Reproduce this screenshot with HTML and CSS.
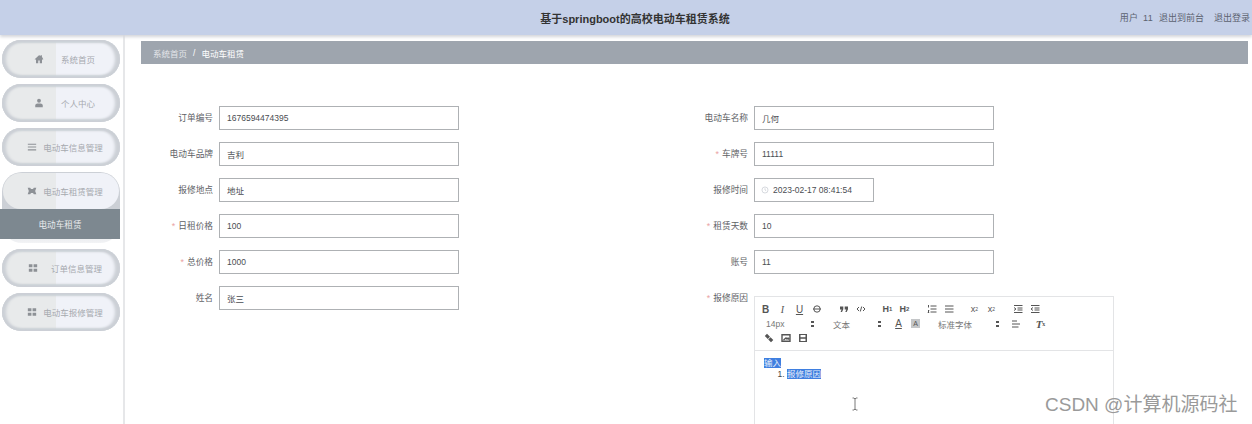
FILE: index.html
```html
<!DOCTYPE html>
<html lang="zh-CN">
<head>
  <meta charset="UTF-8">
  <meta name="viewport" content="width=device-width, initial-scale=1">
  <title>基于springboot的高校电动车租赁系统</title>
  <link rel="stylesheet" href="styles.css">
</head>
<body>
  <header class="top-bar">
    <div class="top-title">基于springboot的高校电动车租赁系统</div>
    <div class="top-links">
      <span class="top-user">用户 11</span>
      <a href="#">退出到前台</a>
      <a class="top-logout" href="#">退出登录</a>
    </div>
  </header>

  <div class="layout">
    <aside class="sidebar">
      <a class="nav-pill nav-wide" href="#">
        <svg class="nav-icon" viewBox="0 0 12 12"><path d="M6 1.500 .8 6.300l.7.7.9-.8V11h2.700V7.800h1.800V11h2.700V6.200l.9.8.7-.7L9.500 3.300V1.600H8.300v.6L6 1.500z"/></svg>
        <span>系统首页</span>
      </a>
      <a class="nav-pill nav-wide" href="#">
        <svg class="nav-icon" viewBox="0 0 12 12"><circle cx="6" cy="3.300" r="2.300"/><path d="M1.500 11V9c0-1.600 1.300-2.500 2.800-2.500h3.400c1.500 0 2.800.9 2.800 2.500v2z"/></svg>
        <span>个人中心</span>
      </a>
      <a class="nav-pill" href="#">
        <svg class="nav-icon" viewBox="0 0 12 12"><path d="M1 2h10v1.300H1zM1 5.400h10v1.300H1zM1 8.800h10v1.300H1z"/></svg>
        <span>电动车信息管理</span>
      </a>
      <div class="nav-group">
        <a class="nav-pill nav-open" href="#">
          <svg class="nav-icon" viewBox="0 0 12 12"><path d="M.8 2h3l1 1.500h2.400l1-1.500h3L9.800 6l1.400 4h-3l-1-1.500H4.800l-1 1.500h-3l1.400-4z"/></svg>
          <span>电动车租赁管理</span>
        </a>
        <a class="nav-sub" href="#">电动车租赁</a>
      </div>
      <a class="nav-pill nav-mid" href="#">
        <svg class="nav-icon" viewBox="0 0 12 12"><path d="M1 1.500h4.300v3.700H1zM6.700 1.500H11v3.700H6.700zM1 6.800h4.300v3.700H1zM6.700 6.800H11v3.700H6.700z"/></svg>
        <span>订单信息管理</span>
      </a>
      <a class="nav-pill" href="#">
        <svg class="nav-icon" viewBox="0 0 12 12"><path d="M1 1.500h4.300v3.700H1zM6.700 1.500H11v3.700H6.700zM1 6.800h4.300v3.700H1zM6.700 6.800H11v3.700H6.700z"/></svg>
        <span>电动车报修管理</span>
      </a>
    </aside>

    <main class="content">
      <div class="crumbs">
        <span class="crumb-home">系统首页</span>
        <span class="crumb-sep">/</span>
        <span class="crumb-now">电动车租赁</span>
      </div>

      <form class="rent-form">
        <div class="field">
          <label>订单编号</label>
          <input class="text-input" value="1676594474395" readonly>
        </div>
        <div class="field">
          <label>电动车名称</label>
          <input class="text-input" value="几何" readonly>
        </div>
        <div class="field">
          <label>电动车品牌</label>
          <input class="text-input" value="吉利" readonly>
        </div>
        <div class="field">
          <label><em>*</em>车牌号</label>
          <input class="text-input" value="11111" readonly>
        </div>
        <div class="field">
          <label>报修地点</label>
          <input class="text-input" value="地址" readonly>
        </div>
        <div class="field">
          <label>报修时间</label>
          <div class="date-input">
            <svg viewBox="0 0 10 10"><circle cx="5" cy="5" r="3.800"/><path d="M5 2.800V5l1.500 1"/></svg>
            <span>2023-02-17 08:41:54</span>
          </div>
        </div>
        <div class="field">
          <label><em>*</em>日租价格</label>
          <input class="text-input" value="100" readonly>
        </div>
        <div class="field">
          <label><em>*</em>租赁天数</label>
          <input class="text-input" value="10" readonly>
        </div>
        <div class="field">
          <label><em>*</em>总价格</label>
          <input class="text-input" value="1000" readonly>
        </div>
        <div class="field">
          <label>账号</label>
          <input class="text-input" value="11" readonly>
        </div>
        <div class="field">
          <label>姓名</label>
          <input class="text-input" value="张三" readonly>
        </div>
        <div class="field">
          <label><em>*</em>报修原因</label>
          <div class="editor">
            <div class="toolbar">
              <div class="tool-row">
                <span class="tool-group">
                  <b class="tool">B</b>
                  <i class="tool tool-serif">I</i>
                  <u class="tool">U</u>
                  <span class="tool"><svg viewBox="0 0 10 10"><circle cx="5" cy="5" r="3.200"/><path d="M1 5h8"/></svg></span>
                </span>
                <span class="tool-group">
                  <span class="tool"><svg class="solid" viewBox="0 0 10 10"><path d="M1 2.500h3.300v2.800L3 8H1.600l1-2.500H1zM5.700 2.500H9v2.800L7.700 8H6.300l1-2.500H5.700z"/></svg></span>
                  <span class="tool"><svg viewBox="0 0 10 10"><path d="M3 3 1 5l2 2M7 3l2 2-2 2M5.700 2.500 4.300 7.500"/></svg></span>
                </span>
                <span class="tool-group">
                  <b class="tool tool-head">H<small>1</small></b>
                  <b class="tool tool-head">H<small>2</small></b>
                </span>
                <span class="tool-group tool-group-tight">
                  <span class="tool"><svg viewBox="0 0 10 10"><path d="M3.500 2H9.500M3.500 5H9.500M3.500 8H9.500M1.500 1v2.500M1 6.500h1L1 8.500h1.200"/></svg></span>
                  <span class="tool"><svg viewBox="0 0 10 10"><path d="M1 2h8.500M1 5h8.500M1 8h8.500"/></svg></span>
                </span>
                <span class="tool-group tool-group-tight">
                  <span class="tool tool-script">x<sub>2</sub></span>
                  <span class="tool tool-script">x<sup>2</sup></span>
                </span>
                <span class="tool-group">
                  <span class="tool"><svg viewBox="0 0 10 10"><path d="M1 1.500h8.500M4.500 4h5M4.500 6h5M1 8.500h8.500M1 3.500 3 5 1 6.500"/></svg></span>
                  <span class="tool"><svg viewBox="0 0 10 10"><path d="M1 1.500h8.500M4.500 4h5M4.500 6h5M1 8.500h8.500M3 3.500 1 5l2 1.500"/></svg></span>
                </span>
              </div>
              <div class="tool-row">
                <span class="picker picker-size">14px</span>
                <span class="picker picker-type">文本</span>
                <span class="tool tool-color">A</span>
                <span class="tool tool-bg"><span>A</span></span>
                <span class="picker picker-font">标准字体</span>
                <span class="tool tool-align"><svg viewBox="0 0 10 10"><path d="M1 2h5M1 5h8M1 8h6.500"/></svg></span>
                <span class="tool tool-clean"><i>T</i><small>x</small></span>
              </div>
              <div class="tool-row tool-row-media">
                <span class="tool"><svg class="solid" viewBox="0 0 10 10"><path d="M.8 3 3 .8l3 3L3.800 6zM4.200 6.500l2.300-2.300 2.800 2.800-2.300 2.300z"/></svg></span>
                <span class="tool"><svg class="thick" viewBox="0 0 10 10"><path d="M1 1.700h8v6.600H1zM2.500 7 5 5l1 1 1-1 1 1.500"/></svg></span>
                <span class="tool"><svg class="solid" viewBox="0 0 10 10"><path d="M1 1h8v8H1zM2.500 2v2.300h5V2zM2.500 5.700V8h5V5.700z"/></svg></span>
              </div>
            </div>
            <div class="editor-body">
              <p><span class="picked">输入</span></p>
              <ol><li><span class="picked">报修原因</span></li></ol>
            </div>
          </div>
        </div>
      </form>
    </main>
  </div>

  <svg class="text-cursor" viewBox="0 0 8 14"><path d="M1.500 1H3l1 1 1-1h1.500M4 2v10M1.500 13H3l1-1 1 1h1.500"/></svg>
  <div class="watermark">CSDN @计算机源码社</div>
</body>
</html>
```

FILE: styles.css
```css
html, body {
  height: 100%;
}

body {
  margin: 0;
  position: relative;
  overflow: hidden;
  background-color: #ffffff;
  color: #555;
  font-family: "Liberation Sans", "Noto Sans CJK SC", sans-serif;
  font-size: 8.7px;
}

a {
  color: inherit;
  text-decoration: none;
}

/* top bar */
.top-bar {
  height: 35px;
  display: flex;
  align-items: center;
  position: relative;
  background-color: #c5d0e8;
  box-shadow: 0 2px 3px #d4d6da;
}

.top-title {
  position: absolute;
  left: 0;
  width: 1270px;
  text-align: center;
  font-size: 11px;
  font-weight: bold;
  color: #333;
}

.top-links {
  margin-left: auto;
  margin-right: 2px;
  display: flex;
  gap: 6px;
  color: #5c6270;
  font-size: 9px;
}

.top-user {
  word-spacing: 2px;
  letter-spacing: .3px;
}

.top-logout {
  margin-left: 4px;
}

/* sidebar */
.layout {
  display: flex;
  height: 389px;
}

.sidebar {
  width: 118px;
  flex-shrink: 0;
  padding: 5px 3px 0 2px;
  display: flex;
  flex-direction: column;
  gap: 6px;
  border-right: 2px solid #e6e7e9;
  color: #a6a9af;
  font-size: 8.5px;
}

.nav-pill {
  height: 38px;
  box-sizing: border-box;
  padding-left: 8px;
  border-radius: 19px;
  display: flex;
  align-items: center;
  justify-content: center;
  gap: 6px;
  background: linear-gradient(90deg, #e8eaeb 46%, #f0f2f8 46%);
  box-shadow: inset 4px 0 3px #ccd0d6, inset -5px 0 3px #ccd0d6, inset 0 3px 2px #ccd0d6, inset 0 -3px 2px #ccd0d6;
}

.nav-wide {
  gap: 17px;
  padding-left: 7px;
}

.nav-mid {
  gap: 13px;
}

.nav-icon {
  width: 10px;
  height: 10px;
  flex-shrink: 0;
  fill: #8d9196;
}

.nav-group {
  height: 71px;
  border-radius: 20px;
  background: linear-gradient(#ccd0d6 60%, #f2f3f5);
}

.nav-open {
  height: 36px;
  margin: 1px 1px 0;
  box-shadow: none;
}

.nav-sub {
  height: 30px;
  margin-left: -2px;
  display: flex;
  align-items: center;
  justify-content: center;
  background-color: #7d8890;
  color: #e8eaec;
  font-size: 8.6px;
}

/* main area */
.content {
  flex: 1;
  min-width: 0;
  padding: 6px 4px 0 16px;
}

.crumbs {
  height: 23px;
  display: flex;
  align-items: center;
  gap: 6px;
  padding-left: 12px;
  background-color: #9ea5ae;
  color: #e4e6ea;
  font-size: 8.5px;
}

.crumb-sep,
.crumb-now {
  color: #ffffff;
}

.rent-form {
  margin-top: 42px;
  display: grid;
  grid-template-columns: 535px 1fr;
  row-gap: 12px;
}

.field {
  display: flex;
  align-items: flex-start;
}

.field label {
  width: 72px;
  margin-right: 6px;
  flex-shrink: 0;
  text-align: right;
  line-height: 24px;
  color: #606266;
}

.field label em {
  font-style: normal;
  color: #eaa3a3;
  margin-right: 3px;
}

.text-input {
  width: 240px;
  height: 24px;
  box-sizing: border-box;
  padding: 0 7px;
  border: 1px solid #aeb1b4;
  outline: none;
  font-family: inherit;
  font-size: 8.5px;
  color: #4a4d52;
}

.date-input {
  width: 120px;
  height: 24px;
  box-sizing: border-box;
  padding-left: 6px;
  border: 1px solid #aeb1b4;
  display: flex;
  align-items: center;
  gap: 4px;
  font-size: 8.5px;
  color: #4a4d52;
}

.date-input svg {
  width: 8px;
  height: 8px;
  fill: none;
  stroke: #c0c4cc;
  stroke-width: .8;
}

/* rich text editor */
.editor {
  width: 360px;
  height: 128px;
  margin-top: 10px;
  flex-shrink: 0;
  box-sizing: border-box;
  border: 1px solid #e3e4e6;
  border-bottom: 0;
}

.toolbar {
  height: 54px;
  box-sizing: border-box;
  padding: 5px 0 0 2px;
  border-bottom: 1px solid #e3e4e6;
}

.tool-row {
  height: 14.5px;
  display: flex;
  align-items: center;
}

.tool-row-media {
  padding-left: 3px;
}

.tool-group {
  display: flex;
  margin-right: 10px;
}

.tool-group-tight {
  margin-right: 9px;
}

.tool {
  width: 17px;
  height: 14px;
  flex-shrink: 0;
  display: flex;
  align-items: center;
  justify-content: center;
  font-size: 10px;
  font-style: normal;
  color: #555;
}

.tool svg {
  width: 10px;
  height: 10px;
  fill: none;
  stroke: #555;
  stroke-width: 1;
}

.tool svg.solid {
  fill: #555;
  stroke: none;
}

.tool svg.thick {
  stroke-width: 1.4;
}

.tool-serif {
  font-family: "Liberation Serif", serif;
  font-style: italic;
}

.tool-head {
  font-size: 9px;
}

.tool-head small {
  font-size: 6px;
}

.tool-script {
  font-size: 9px;
}

.tool-script sub,
.tool-script sup {
  font-size: 5px;
  line-height: 0;
}

.picker {
  position: relative;
  width: 58px;
  padding-left: 9px;
  box-sizing: border-box;
  flex-shrink: 0;
  font-size: 8.5px;
  color: #777;
}

/* up and down arrows of a select */
.picker::after {
  content: "";
  position: absolute;
  right: 1px;
  top: 50%;
  margin-top: -3px;
  width: 3px;
  height: 2px;
  border-top: 2px solid #555;
  border-bottom: 2px solid #555;
}

.picker-type {
  margin-left: 9px;
}

.picker-font {
  width: 70px;
  margin-left: 6px;
  padding-left: 8px;
}

.tool-color {
  margin-left: 8px;
  text-decoration: underline;
}

.tool-bg span {
  width: 9px;
  height: 9px;
  display: flex;
  align-items: center;
  justify-content: center;
  background-color: #c4c6c8;
  font-size: 7px;
}

.tool-align {
  margin-left: 7px;
}

.tool-clean {
  margin-left: 8px;
  font-family: "Liberation Serif", serif;
  font-size: 11px;
  font-weight: bold;
}

.tool-clean small {
  font-size: 6px;
}

.editor-body {
  padding: 7px 9px;
  font-size: 8.5px;
  line-height: 11px;
  color: #444;
}

.editor-body p,
.editor-body ol {
  margin: 0;
}

.editor-body ol {
  padding-left: 23px;
}

.picked {
  background-color: #3f7fe0;
  color: #e8effa;
}

/* overlays */
.text-cursor {
  position: absolute;
  left: 851px;
  top: 397px;
  width: 8px;
  height: 14px;
  fill: none;
  stroke: #555;
  stroke-width: .8;
}

.watermark {
  position: absolute;
  left: 1045px;
  top: 393px;
  font-size: 19px;
  line-height: 24px;
  color: #9a9a9a;
  white-space: nowrap;
}
```
